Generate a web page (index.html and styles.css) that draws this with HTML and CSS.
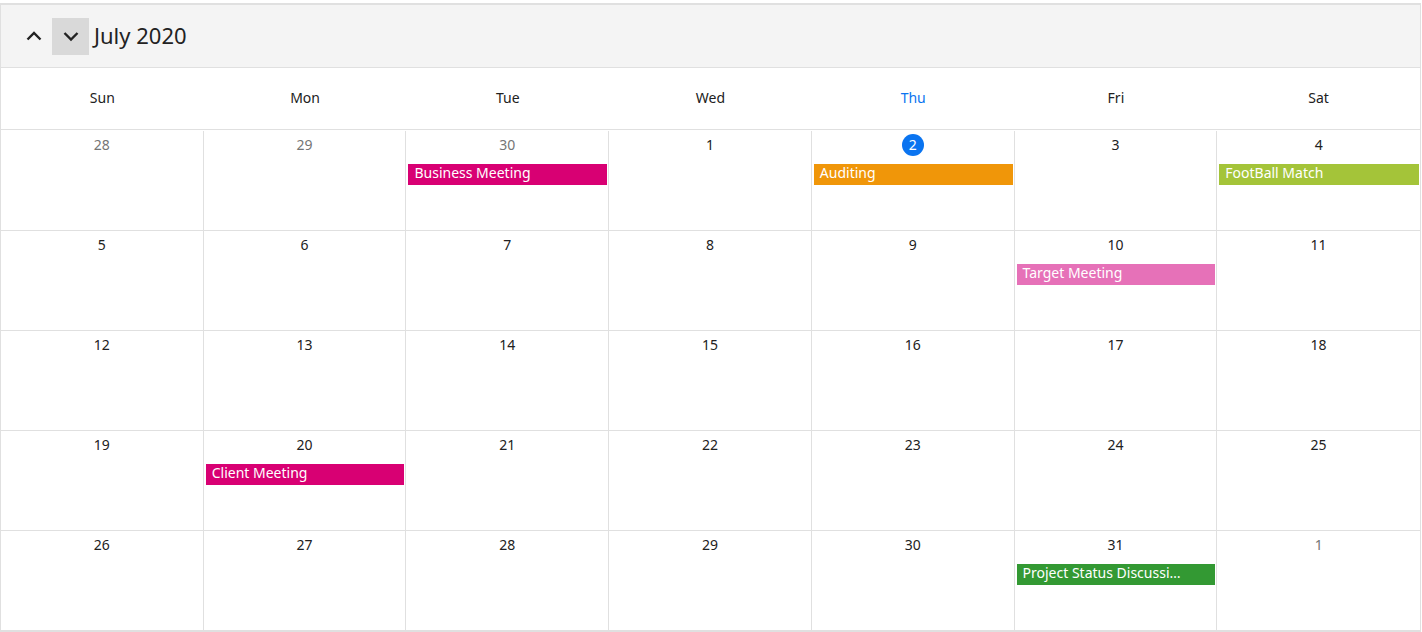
FILE: index.html
```html
<!DOCTYPE html>
<html lang="en">
<head>
  <meta charset="UTF-8">
  <title>Scheduler - Month</title>
  <link rel="stylesheet" href="styles.css">
</head>
<body>
  <div class="scheduler">
    <div class="toolbar">
      <button class="nav-btn" title="Previous">
        <svg width="16" height="16" viewBox="0 0 16 16"><path d="M1.5 11.5 L8 5 L14.5 11.5" fill="none" stroke="#222" stroke-width="2.4"/></svg>
      </button>
      <button class="nav-btn active" title="Next">
        <svg width="16" height="16" viewBox="0 0 16 16"><path d="M1.5 5 L8 11.5 L14.5 5" fill="none" stroke="#222" stroke-width="2.4"/></svg>
      </button>
      <span class="title">July 2020</span>
    </div>
    <div class="day-names">
      <div>Sun</div><div>Mon</div><div>Tue</div><div>Wed</div><div class="today">Thu</div><div>Fri</div><div>Sat</div>
    </div>
    <div class="month" id="month"></div>
  </div>
  <script>
    const events = {
      '6-30': { text: 'Business Meeting', color: '#d80073' },
      '7-2': { text: 'Auditing', color: '#f09609' },
      '7-4': { text: 'FootBall Match', color: '#a4c439' },
      '7-10': { text: 'Target Meeting', color: '#e671b8' },
      '7-20': { text: 'Client Meeting', color: '#d80073' },
      '7-31': { text: 'Project Status Discussion', color: '#339933' }
    };
    const month = document.getElementById('month');
    // first cell is Sun 28 June 2020
    let d = new Date(2020, 5, 28);
    for (let i = 0; i < 35; i++) {
      const m = d.getMonth() + 1;
      const day = d.getDate();
      const cell = document.createElement('div');
      cell.className = 'cell';
      const num = document.createElement('div');
      num.className = 'date';
      if (m !== 7) num.classList.add('other');
      const span = document.createElement('span');
      span.textContent = day;
      if (m === 7 && day === 2) span.className = 'today-badge';
      num.appendChild(span);
      cell.appendChild(num);
      const ev = events[m + '-' + day];
      if (ev) {
        const bar = document.createElement('div');
        bar.className = 'event';
        bar.style.background = ev.color;
        bar.textContent = ev.text;
        cell.appendChild(bar);
      }
      month.appendChild(cell);
      d.setDate(day + 1);
    }
  </script>
</body>
</html>
```

FILE: styles.css
```css
body {
  margin: 0;
  font-family: 'Noto Sans', 'Open Sans', Arial, sans-serif;
  color: #212121;
  background: #fff;
}
.scheduler {
  margin-top: 3px;
  width: 1419px;
  border: 1px solid #e0e0e0;
  border-top-width: 2px;
}
.toolbar {
  height: 62px;
  background: #f4f4f4;
  border-bottom: 1px solid #e0e0e0;
  display: flex;
  align-items: center;
  padding-left: 14px;
}
.nav-btn {
  width: 37px;
  height: 37px;
  border: none;
  background: transparent;
  display: flex;
  align-items: center;
  justify-content: center;
  padding: 0;
}
.nav-btn.active {
  background: #d9d9d9;
}
.title {
  font-size: 22px;
  margin-left: 5px;
  margin-bottom: 3px;
  color: #222;
}
.day-names {
  display: grid;
  grid-template-columns: repeat(7, 1fr);
  height: 61px;
  border-bottom: 1px solid #e0e0e0;
}
.day-names div {
  display: flex;
  align-items: center;
  justify-content: center;
  font-size: 14px;
  padding-bottom: 2px;
}
.day-names .today {
  color: #0a74f0;
}
.month {
  display: grid;
  grid-template-columns: repeat(7, 1fr);
  grid-auto-rows: 100px;
  padding-top: 1px;
}
.cell {
  border-right: 1px solid #e0e0e0;
  border-bottom: 1px solid #e0e0e0;
  box-sizing: border-box;
  overflow: hidden;
}
.cell:nth-child(7n) {
  border-right: none;
}
.date {
  text-align: center;
  font-size: 14px;
  height: 22px;
  line-height: 22px;
  margin-top: 3px;
}
.date.other {
  color: #757575;
}
.today-badge {
  display: inline-block;
  width: 22px;
  height: 22px;
  border-radius: 50%;
  background: #0a74f0;
  color: #fff;
}
.event {
  margin: 8px 1px 0 2px;
  height: 21px;
  line-height: 18px;
  color: #fff;
  font-size: 14px;
  padding-left: 6px;
  white-space: nowrap;
  overflow: hidden;
  text-overflow: ellipsis;
  padding-right: 30px;
}
```
